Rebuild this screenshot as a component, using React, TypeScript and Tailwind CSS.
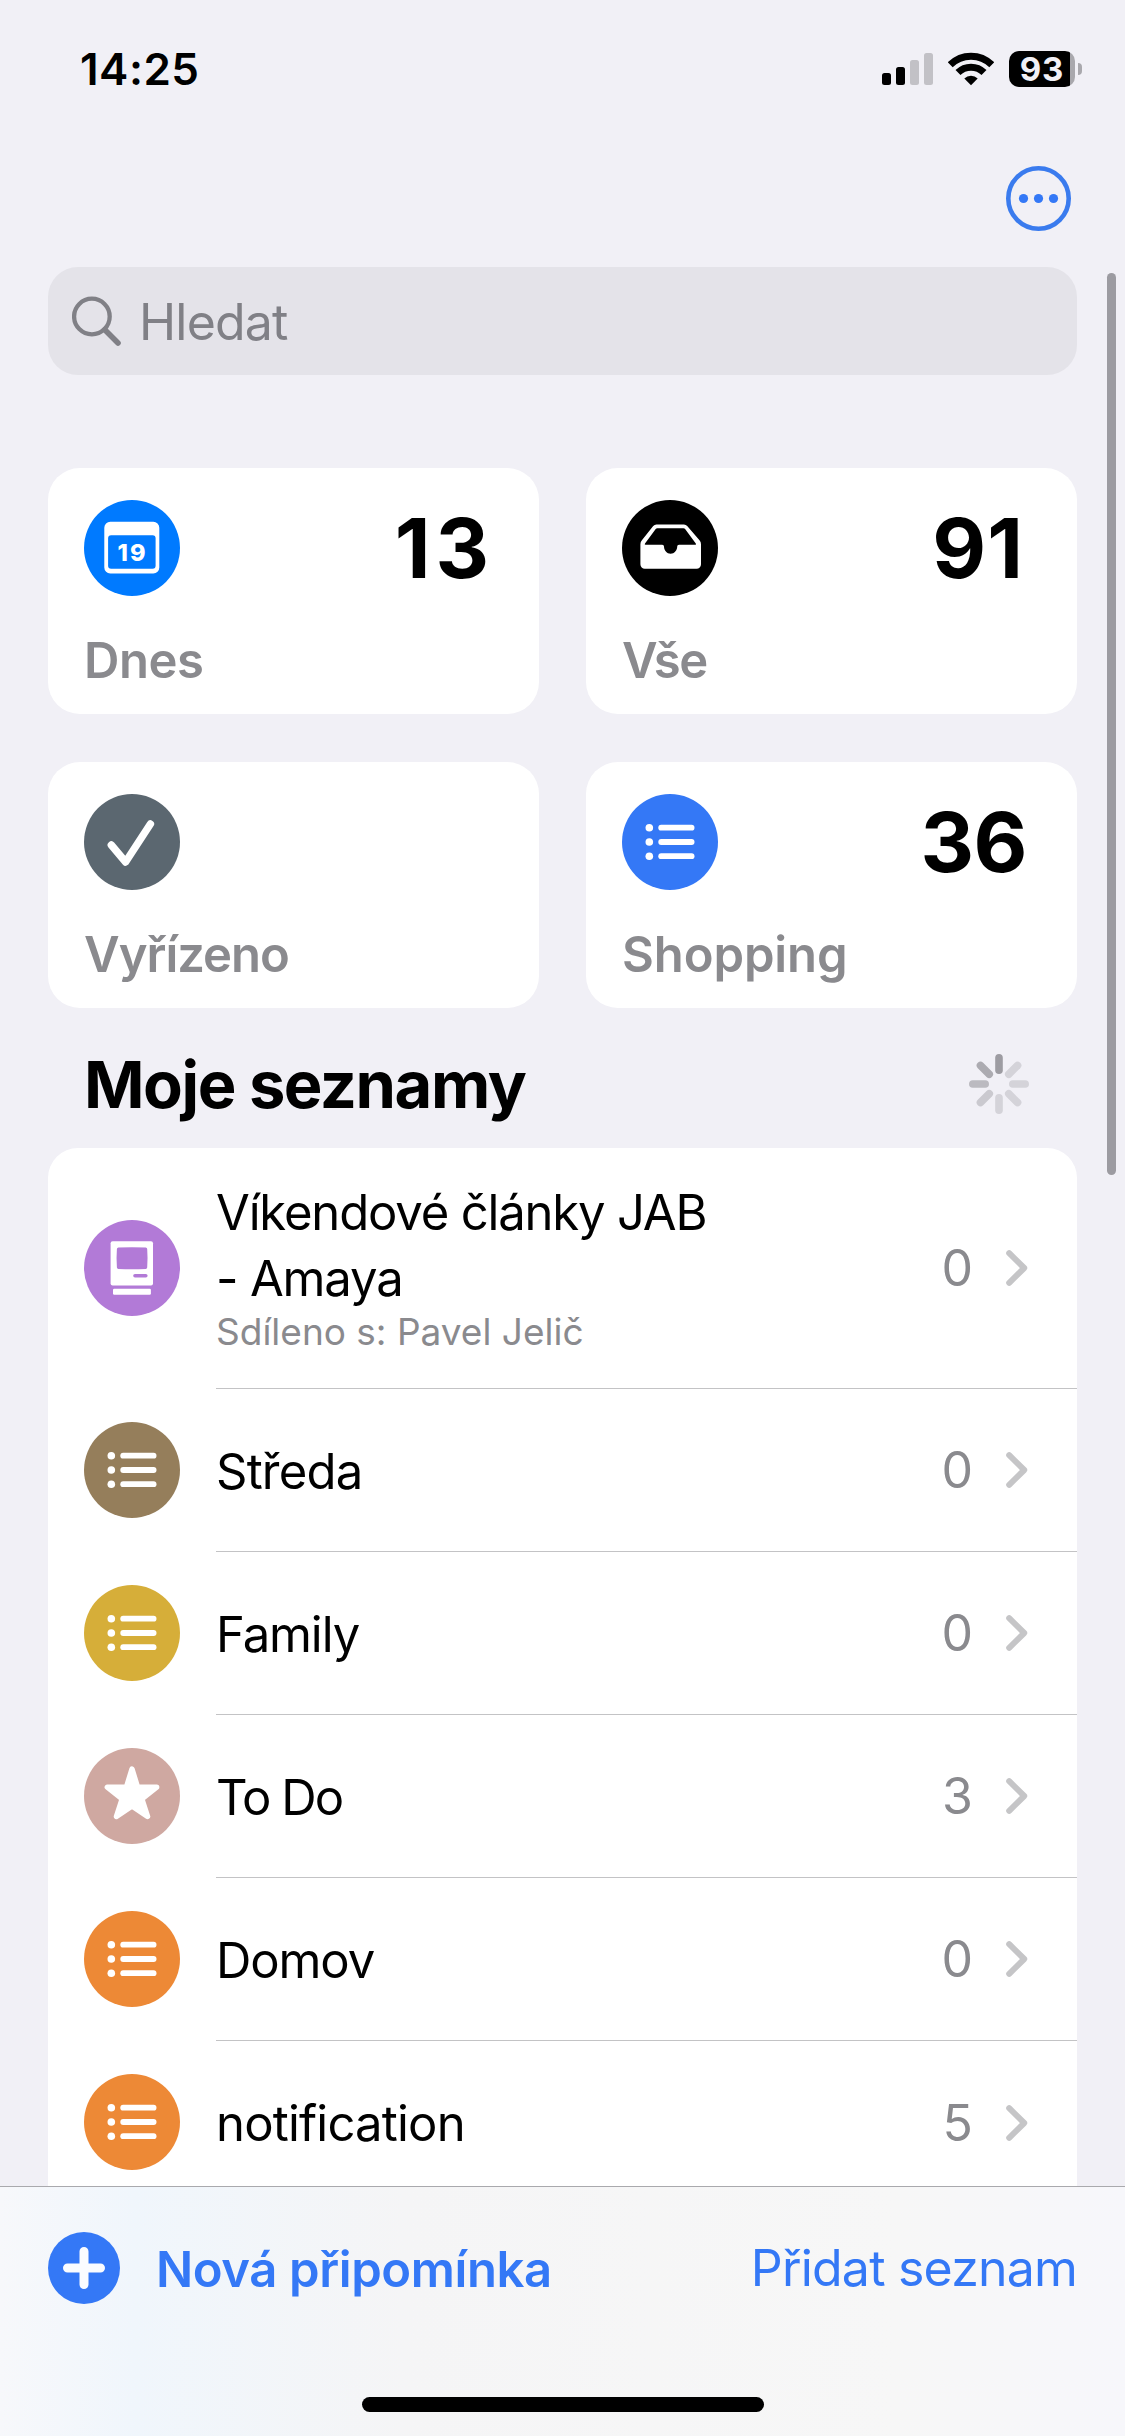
import React from 'react';

type IconName = 'today' | 'all' | 'done' | 'list' | 'mac' | 'star';

interface SmartList {
  title: string;
  titleClass: string;
  icon: IconName;
  color: string;
  count?: number;
  countClass?: string;
}

interface ReminderList {
  title: React.ReactNode;
  titleClass: string;
  icon: IconName;
  color: string;
  count: number;
  sharedWith?: string;
}

const smartLists: SmartList[] = [
  { title: 'Dnes', titleClass: 'tracking-[-0.45px]', icon: 'today', color: 'text-[#007aff]', count: 13, countClass: 'tracking-[5px] mr-[45px]' },
  { title: 'Vše', titleClass: 'tracking-[-1.6px]', icon: 'all', color: 'text-black', count: 91, countClass: 'tracking-[1px] mr-[53px]' },
  { title: 'Vyřízeno', titleClass: 'tracking-[-1px]', icon: 'done', color: 'text-[#5b6770]' },
  { title: 'Shopping', titleClass: 'tracking-[-0.1px]', icon: 'list', color: 'text-[#3478f6]', count: 36, countClass: 'tracking-[-0.5px] mr-[50px]' },
];

const myLists: ReminderList[] = [
  { title: <>Víkendové články JAB<br />- Amaya</>, titleClass: 'tracking-[-1.17px]', icon: 'mac', color: 'text-[#b27ad7]', count: 0, sharedWith: 'Sdíleno s: Pavel Jelič' },
  { title: 'Středa', titleClass: 'tracking-[-0.8px]', icon: 'list', color: 'text-[#957e5b]', count: 0 },
  { title: 'Family', titleClass: 'tracking-[-1.1px]', icon: 'list', color: 'text-[#d6ae39]', count: 0 },
  { title: 'To Do', titleClass: 'tracking-[-1.9px]', icon: 'star', color: 'text-[#cfa8a1]', count: 3 },
  { title: 'Domov', titleClass: 'tracking-[-1.1px]', icon: 'list', color: 'text-[#ed8936]', count: 0 },
  { title: 'notification', titleClass: 'tracking-[-0.8px]', icon: 'list', color: 'text-[#ed8936]', count: 5 },
];

const glyphs: Record<IconName, React.ReactNode> = {
  today: (
    <>
      <path fillRule="evenodd" fill="#fff" d="M26.3 21.8h43a6 6 0 0 1 6 6v39.8a6 6 0 0 1-6 6h-43a6 6 0 0 1-6-6V27.8a6 6 0 0 1 6-6Zm.8 13.4a3 3 0 0 0-3 3v27.6a3 3 0 0 0 3 3h41.5a3 3 0 0 0 3-3V38.2a3 3 0 0 0-3-3Z" />
      <text x="47.6" y="61" textAnchor="middle" fontSize="23.5" fontWeight="800" textLength="28" fill="#fff">19</text>
    </>
  ),
  all: (
    <>
      <path fill="#fff" d="M34.5 24.4h27.4a4 4 0 0 1 3.3 1.7l12.3 14.2a6 6 0 0 1 1.5 4v20a4.4 4.4 0 0 1-4.4 4.4H22.8a4.4 4.4 0 0 1-4.4-4.4v-20a6 6 0 0 1 1.5-4L31.2 26.1a4 4 0 0 1 3.3-1.7Z" />
      <path fill="currentColor" d="M35.3 28.3h26.2a2 2 0 0 1 1.6.8L73.8 43.6q.8 1.2-.6 1.2H57a1.8 1.8 0 0 0-1.8 1.8c0 4-2.9 7.2-6.6 7.2S42 50.6 42 46.6a1.8 1.8 0 0 0-1.8-1.8H23.6q-1.4 0-.6-1.2L33.7 29.1a2 2 0 0 1 1.6-.8Z" />
    </>
  ),
  done: <path d="M27.3 51 41.6 68 66.4 30" fill="none" stroke="#fff" strokeWidth="7.4" strokeLinecap="round" strokeLinejoin="round" />,
  list: (
    <g fill="#fff">
      <circle cx="27.3" cy="33.7" r="3.8" />
      <circle cx="27.3" cy="48" r="3.8" />
      <circle cx="27.3" cy="62.2" r="3.8" />
      <rect x="36.3" y="30.8" width="36.2" height="5.8" rx="2.9" />
      <rect x="36.3" y="45.1" width="36.2" height="5.8" rx="2.9" />
      <rect x="36.3" y="59.3" width="36.2" height="5.8" rx="2.9" />
    </g>
  ),
  mac: (
    <>
      <rect x="26.6" y="21.2" width="42.4" height="44.2" rx="2" fill="#fff" />
      <path d="M34.4 27.6Q48 26.7 61.7 27.6q1.4.1 1.5 1.5.7 9.2 0 18.3-.1 1.4-1.5 1.5-13.7.9-27.3 0-1.4-.1-1.5-1.5-.7-9.1 0-18.3.1-1.4 1.5-1.5Z" fill="currentColor" />
      <rect x="49.2" y="54" width="14.4" height="3.6" rx="1.8" fill="currentColor" />
      <rect x="29" y="68.7" width="37.9" height="6" rx="1.2" fill="#fff" />
    </>
  ),
  star: <path d="M48 21 53.6 39.2H72.7L57.9 51 63.6 68.5 48 58 32.4 68.5 38.1 51 23.3 39.2H42.4Z" fill="#fff" stroke="#fff" strokeWidth="5.4" strokeLinejoin="round" />,
};

const ListIcon: React.FC<{ name: IconName; color: string }> = ({ name, color }) => (
  <svg viewBox="0 0 96 96" className={`size-24 shrink-0 ${color}`}>
    <circle cx="48" cy="48" r="48" fill="currentColor" />
    {glyphs[name]}
  </svg>
);

const StatusBar: React.FC = () => (
  <header className="flex h-[138px] shrink-0 items-center pr-[43px] pl-20">
    <span className="text-[44px] leading-none font-semibold tracking-[0.5px]">14:25</span>
    <svg viewBox="0 0 51 34" className="mr-[15px] ml-auto h-[34px] w-[51px]">
      <rect x="0" y="21" width="9" height="12" rx="2.5" />
      <rect x="14" y="15" width="9" height="18" rx="2.5" />
      <rect x="28" y="8" width="9" height="25" rx="2.5" fill="#c2c1c6" />
      <rect x="42" y="1" width="9" height="32" rx="2.5" fill="#c2c1c6" />
    </svg>
    <svg viewBox="0 0 46 34" className="mr-[15px] h-[34px] w-[46px]">
      <path d="M2.2 12.8a29.4 29.4 0 0 1 41.6 0" fill="none" stroke="#000" strokeWidth="7" />
      <path d="M10 20.6a18.4 18.4 0 0 1 26 0" fill="none" stroke="#000" strokeWidth="7" />
      <path d="M16.3 26.5a9.6 9.6 0 0 1 13.4 0L23 33.3Z" />
    </svg>
    <div className="flex h-9 w-[66px] items-center justify-center rounded-[10px] bg-[linear-gradient(90deg,#000_92.5%,#a9a8ad_92.5%)]">
      <span className="text-[33px] leading-none font-bold tracking-[1px] text-[#f1f0f6]">93</span>
    </div>
    <div className="ml-[3px] h-3 w-1 rounded-r-full bg-[#a9a8ad]" />
  </header>
);

const SmartCard: React.FC<{ list: SmartList }> = ({ list }) => (
  <div className="flex h-[246px] flex-col rounded-[32px] bg-white pt-8 pl-9">
    <div className="flex items-center justify-between">
      <ListIcon name={list.icon} color={list.color} />
      {list.count !== undefined && (
        <span className={`text-[83px] leading-none font-bold ${list.countClass}`}>{list.count}</span>
      )}
    </div>
    <span className={`mt-[35px] text-[49px] leading-[60px] font-semibold text-[#8a8a8e] ${list.titleClass}`}>{list.title}</span>
  </div>
);

const ListRow: React.FC<{ list: ReminderList; last: boolean }> = ({ list, last }) => (
  <div className={`flex items-center pl-9 ${list.sharedWith ? 'h-[241px]' : 'h-[163px]'}`}>
    <div className="pb-[2px]">
      <ListIcon name={list.icon} color={list.color} />
    </div>
    <div className={`ml-9 flex h-full flex-1 items-center pr-[49px] ${last ? '' : 'border-b border-[#c3c3c5]'}`}>
      <div className={`flex flex-col ${list.sharedWith ? 'pb-[5px]' : 'pt-[3px]'}`}>
        <span className={`text-[49px] leading-[66px] ${list.titleClass}`}>{list.title}</span>
        {list.sharedWith && <span className="text-[37px] leading-10 text-[#8a8a8e]">{list.sharedWith}</span>}
      </div>
      <span className="ml-auto text-[50px] leading-none text-[#8a8a8e]">{list.count}</span>
      <svg viewBox="0 0 22 36" className="ml-[33px] h-9 w-[22px]">
        <path d="M3.2 3.2 18.2 18 3.2 32.8" fill="none" stroke="#c5c5c7" strokeWidth="6" strokeLinecap="round" strokeLinejoin="round" />
      </svg>
    </div>
  </div>
);

const Spinner: React.FC = () => (
  <svg viewBox="-30 -30 60 60" className="size-[60px]">
    {['#9d9ca2', '#d4d3d9', '#d4d3d9', '#d4d3d9', '#d4d3d9', '#cac9cf', '#bbbac0', '#acabb1'].map((fill, i) => (
      <rect key={i} x="-3.8" y="-30" width="7.6" height="20" rx="3.8" fill={fill} transform={`rotate(${i * 45})`} />
    ))}
  </svg>
);

export default function App() {
  return (
    <div className="relative flex h-[2436px] w-[1125px] flex-col overflow-hidden bg-[#f1f0f6] font-['Inter',sans-serif] text-black">
      <StatusBar />

      <div className="flex h-[121px] shrink-0 items-center justify-end pr-[54px]">
        <svg viewBox="0 0 65 65" className="size-[65px]">
          <circle cx="32.5" cy="32.5" r="30.2" fill="none" stroke="#3a7bee" strokeWidth="4.6" />
          <g fill="#3478f6">
            <circle cx="17.5" cy="32.5" r="4.6" />
            <circle cx="32.5" cy="32.5" r="4.6" />
            <circle cx="47.5" cy="32.5" r="4.6" />
          </g>
        </svg>
      </div>

      <main className="min-h-0 flex-1 overflow-hidden px-12 pt-2">
        <div className="flex h-[108px] items-center rounded-[30px] bg-[#e4e3e9] pl-6 text-[#808086]">
          <svg viewBox="0 0 50 50" className="size-[50px]">
            <circle cx="19.9" cy="20.5" r="17.8" fill="none" stroke="currentColor" strokeWidth="4.3" />
            <path d="M32.8 33.8 46 47" stroke="currentColor" strokeWidth="5.6" strokeLinecap="round" />
          </svg>
          <span className="ml-[17px] pt-[2px] text-[50px] leading-none tracking-[-0.8px]">Hledat</span>
        </div>

        <div className="mt-[93px] grid grid-cols-2 gap-x-[47px] gap-y-12">
          {smartLists.map((list) => <SmartCard key={list.title} list={list} />)}
        </div>

        <div className="flex h-[140px] items-center justify-between pt-3 pr-12 pl-9">
          <h2 className="text-[65px] leading-none font-bold tracking-[-1.45px]">Moje seznamy</h2>
          <Spinner />
        </div>

        <div className="rounded-t-[30px] bg-white">
          {myLists.map((list, i) => <ListRow key={i} list={list} last={i === myLists.length - 1} />)}
        </div>
      </main>

      <footer className="flex h-[250px] shrink-0 flex-col items-center border-t border-[#a9a9ad] bg-[linear-gradient(90deg,#f7f8fb_0%,#f0f6fc_12%,#f5f5f6_36%,#f7f7f7_80%,#f7f7fb_100%)]">
        <div className="flex w-full items-center justify-between px-12 pt-[45px] text-[#3478f6]">
          <div className="flex items-center gap-9">
            <svg viewBox="0 0 72 72" className="size-[72px]">
              <circle cx="36" cy="36" r="36" fill="currentColor" />
              <path d="M36 19.5v33M19.5 36h33" stroke="#fafcff" strokeWidth="9" strokeLinecap="round" />
            </svg>
            <span className="pt-[2px] text-[49px] leading-none font-semibold tracking-[-0.39px]">Nová připomínka</span>
          </div>
          <span className="text-[50px] leading-none tracking-[-0.8px]">Přidat seznam</span>
        </div>
        <div className="mt-[93px] h-[15px] w-[402px] rounded-full bg-black" />
      </footer>

      {/* scroll indicator */}
      <div className="absolute top-[273px] right-[9px] h-[902px] w-[9px] rounded-full bg-[#9c9ba1]" />
    </div>
  );
}
